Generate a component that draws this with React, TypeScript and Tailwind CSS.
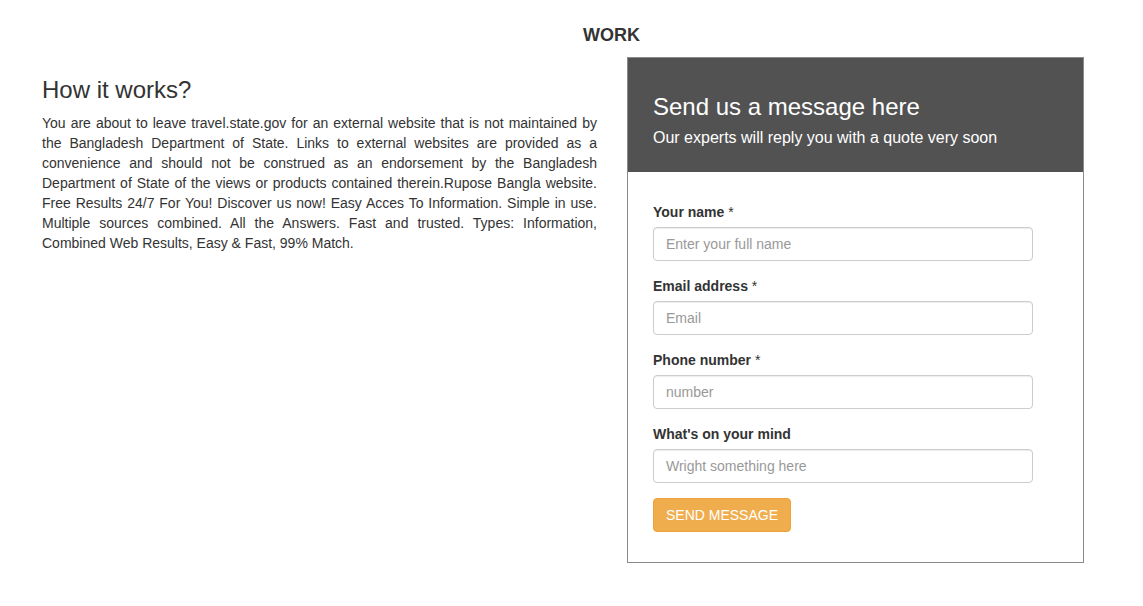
const fields = [
  {label: 'Your name', required: true, placeholder: 'Enter your full name'},
  {label: 'Email address', required: true, placeholder: 'Email'},
  {label: 'Phone number', required: true, placeholder: 'number'},
  {label: "What's on your mind", required: false, placeholder: 'Wright something here'},
]

export default function App() {
  return (
    <div className="min-h-[606px] bg-white font-['Liberation_Sans',Arial,sans-serif] text-[14px] leading-[20px] text-[#333]">
      <h2 className="pt-[25px] pl-[80px] text-center text-[18px] leading-[20px] font-bold text-[#333]">WORK</h2>

      <div className="mt-[12px] flex gap-[30px] pl-[42px]">
        <div className="w-[555px] pt-[20px]">
          <h3 className="mb-[10px] text-[24px] leading-[26px] font-normal">How it works?</h3>
          <p className="text-justify">
            You are about to leave travel.state.gov for an external website that is not maintained by the Bangladesh Department of State. Links to external websites are provided as a convenience and should not be construed as an endorsement by the Bangladesh Department of State of the views or products contained therein.Rupose Bangla website. Free Results 24/7 For You! Discover us now! Easy Acces To Information. Simple in use. Multiple sources combined. All the Answers. Fast and trusted. Types: Information, Combined Web Results, Easy &amp; Fast, 99% Match.
          </p>
        </div>

        <div className="w-[457px] border border-[#8a8a8a]">
          <div className="bg-[#525252] px-[25px] pt-[36px] pb-[23px] text-white">
            <h3 className="text-[24px] leading-[26px] font-normal">Send us a message here</h3>
            <p className="mt-[7px] text-[16px] leading-[22px]">Our experts will reply you with a quote very soon</p>
          </div>

          <form className="px-[25px] pt-[30px] pb-[30px]">
            {fields.map(field => (
              <div key={field.label} className="mb-[15px]">
                <label className="mb-[5px] block font-bold">
                  {field.label}
                  {field.required && <span className="font-normal"> *</span>}
                </label>
                <input
                  type="text"
                  placeholder={field.placeholder}
                  className="block h-[34px] w-[380px] rounded-[4px] border border-[#ccc] px-[12px] text-[14px] text-[#555] shadow-[inset_0_1px_1px_rgba(0,0,0,0.075)] outline-none placeholder:text-[#999]"
                />
              </div>
            ))}
            <button
              type="button"
              className="h-[34px] rounded-[4px] border border-[#eea236] bg-[#f0ad4e] px-[12px] text-[14px] leading-[20px] text-white uppercase"
            >
              Send message
            </button>
          </form>
        </div>
      </div>
    </div>
  )
}
